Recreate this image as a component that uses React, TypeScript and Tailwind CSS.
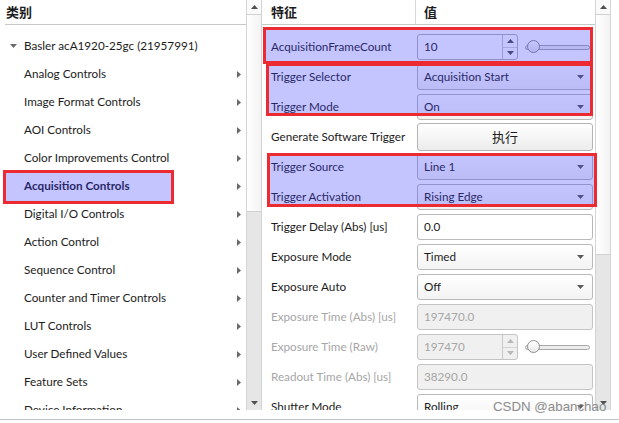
import React from "react";

type Dir = "up" | "down" | "right";

function Tri({ dir, className }: { dir: Dir; className?: string }) {
  const pts =
    dir === "up" ? "0,4 3.5,0 7,4" : dir === "down" ? "0,0 7,0 3.5,4" : "0,0 4,3.5 0,7";
  const w = dir === "right" ? 4 : 7;
  const h = dir === "right" ? 7 : 4;
  return (
    <svg width={w} height={h} viewBox={`0 0 ${w} ${h}`} className={className}>
      <polygon points={pts} fill="currentColor" />
    </svg>
  );
}

function ScrollBar({ thumb }: { thumb: number }) {
  return (
    <div className="flex flex-col w-[16px] h-full border-l border-r border-[#d4d4d4] bg-[#fafafa]">
      <div className="h-[14px] flex items-center justify-center text-[#505050]">
        <Tri dir="up" />
      </div>
      <div
        className="w-full border-y border-[#d0d0d0] bg-gradient-to-r from-white to-[#f3f3f3]"
        style={{ height: thumb }}
      />
      <div className="flex-1 bg-[#e6e6e6]" />
      <div className="h-[14px] flex items-center justify-center text-[#505050] bg-[#e6e6e6]">
        <Tri dir="down" />
      </div>
    </div>
  );
}

const categories = [
  "Analog Controls",
  "Image Format Controls",
  "AOI Controls",
  "Color Improvements Control",
  "Acquisition Controls",
  "Digital I/O Controls",
  "Action Control",
  "Sequence Control",
  "Counter and Timer Controls",
  "LUT Controls",
  "User Defined Values",
  "Feature Sets",
  "Device Information",
];

function Combo({ value }: { value: string }) {
  return (
    <div className="flex items-center justify-between h-[26px] rounded-[3px] border border-[#b9b9b9] bg-gradient-to-b from-white to-[#f3f3f3] pl-[6px] pr-[8px]">
      <span>{value}</span>
      <Tri dir="down" className="text-[#5a5a5a]" />
    </div>
  );
}

function TextBox({ value, disabled }: { value: string; disabled?: boolean }) {
  return (
    <div
      className={`flex items-center h-[26px] rounded-[3px] border pl-[6px] ${
        disabled ? "border-[#c4c4c4] bg-[#f0f0f0] text-[#a6a6a6]" : "border-[#b9b9b9] bg-white"
      }`}
    >
      {value}
    </div>
  );
}

function Spin({ value, disabled }: { value: string; disabled?: boolean }) {
  return (
    <div className="flex items-center h-[26px] gap-[7px]">
      <div
        className={`flex h-full w-[101px] rounded-[3px] border ${
          disabled ? "border-[#c4c4c4] bg-[#f0f0f0] text-[#a6a6a6]" : "border-[#b4b4b4] bg-white"
        }`}
      >
        <div className="flex-1 flex items-center pl-[6px]">{value}</div>
        <div
          className={`w-[15px] flex flex-col border-l border-[#c8c8c8] ${
            disabled ? "text-[#b8b8b8]" : "text-[#505050]"
          }`}
        >
          <div className="flex-1 flex items-center justify-center border-b border-[#d4d4d4]">
            <Tri dir="up" />
          </div>
          <div className="flex-1 flex items-center justify-center">
            <Tri dir="down" />
          </div>
        </div>
      </div>
      <div className="relative flex-1 h-[14px] flex items-center mr-[3px]">
        <div className="w-full h-[5px] rounded-full border border-[#a8a8a8] bg-[#ececec]" />
        <div className="absolute left-[2px] top-[0px] w-[13px] h-[13px] rounded-full border border-[#8f8f8f] bg-gradient-to-b from-white to-[#e8e8e8]" />
      </div>
    </div>
  );
}

type Row = { label: string; disabled?: boolean; widget: React.ReactNode };

const rows: Row[] = [
  { label: "AcquisitionFrameCount", widget: <Spin value="10" /> },
  { label: "Trigger Selector", widget: <Combo value="Acquisition Start" /> },
  { label: "Trigger Mode", widget: <Combo value="On" /> },
  {
    label: "Generate Software Trigger",
    widget: (
      <div className="flex items-center justify-center h-[28px] rounded-[3px] border border-[#b4b4b4] bg-gradient-to-b from-white to-[#ececec] font-['Noto_Sans_CJK_SC',sans-serif] text-[13px]">
        执行
      </div>
    ),
  },
  { label: "Trigger Source", widget: <Combo value="Line 1" /> },
  { label: "Trigger Activation", widget: <Combo value="Rising Edge" /> },
  { label: "Trigger Delay (Abs) [us]", widget: <TextBox value="0.0" /> },
  { label: "Exposure Mode", widget: <Combo value="Timed" /> },
  { label: "Exposure Auto", widget: <Combo value="Off" /> },
  { label: "Exposure Time (Abs) [us]", disabled: true, widget: <TextBox value="197470.0" disabled /> },
  { label: "Exposure Time (Raw)", disabled: true, widget: <Spin value="197470" disabled /> },
  { label: "Readout Time (Abs) [us]", disabled: true, widget: <TextBox value="38290.0" disabled /> },
  { label: "Shutter Mode", widget: <Combo value="Rolling" /> },
];

export default function App() {
  return (
    <div className="relative w-[619px] h-[423px] overflow-hidden bg-white text-[11.7px] text-[#1c1c1c] font-['Lato','Noto_Sans_CJK_SC',sans-serif]">
      <div className="flex h-[410px] overflow-hidden">
        {/* category tree */}
        <div className="w-[246px] flex flex-col overflow-hidden">
          <div className="ml-[5px] h-[25px] shrink-0 flex items-center border-b border-[#c8c8c8] font-bold text-[13px] font-['Noto_Sans_CJK_SC',sans-serif] pl-[1px]">
            类别
          </div>
          <div className="pt-[7px] flex flex-col">
            <div className="h-[28px] shrink-0 flex items-center">
              <Tri dir="down" className="ml-[10px] mr-[7px] text-[#6a6a6a]" />
              <span>Basler acA1920-25gc (21957991)</span>
            </div>
            {categories.map((c) => (
              <div key={c} className="h-[28px] shrink-0 flex items-center justify-between pl-[24px] pr-[5px]">
                <span className={c === "Acquisition Controls" ? "font-bold" : ""}>{c}</span>
                <Tri dir="right" className="text-[#6a6a6a]" />
              </div>
            ))}
          </div>
        </div>

        <ScrollBar thumb={198} />

        {/* feature grid */}
        <div className="w-[333px] flex flex-col overflow-hidden">
          <div className="h-[25px] shrink-0 flex border-b border-[#c8c8c8] font-bold text-[13px] font-['Noto_Sans_CJK_SC',sans-serif]">
            <div className="w-[154px] pl-[9px] flex items-center border-r border-[#d8d8d8]">特征</div>
            <div className="pl-[8px] flex items-center">值</div>
          </div>
          <div className="pt-[7px] flex flex-col">
            {rows.map((r) => (
              <div key={r.label} className="h-[30px] shrink-0 flex items-center">
                <div className={`w-[154px] pl-[9px] ${r.disabled ? "text-[#a6a6a6]" : ""}`}>{r.label}</div>
                <div className="w-[179px] pl-[1px] pr-[2px]">{r.widget}</div>
              </div>
            ))}
          </div>
        </div>

        <ScrollBar thumb={241} />
        <div className="flex-1" />
      </div>
      <div className="mt-[9px] h-px bg-[#c4c4c4]" />

      {/* annotation boxes */}
      <div className="absolute left-[3px] top-[170px] w-[171px] h-[34px] border-[3px] border-[#ec2a32] bg-[#3a3aff]/30" />
      <div className="absolute left-[263px] top-[27px] w-[330px] h-[37px] border-[3px] border-[#ec2a32] bg-[#3a3aff]/30" />
      <div className="absolute left-[266px] top-[63px] w-[327px] h-[53px] border-[3px] border-[#ec2a32] bg-[#3a3aff]/30" />
      <div className="absolute left-[267px] top-[153px] w-[330px] h-[54px] border-[3px] border-[#ec2a32] bg-[#3a3aff]/30" />

      <div className="absolute left-[493px] top-[399px] whitespace-nowrap text-[13.3px] leading-[16px] text-[#8c8c8c] font-['Liberation_Sans',sans-serif]">
        CSDN @abanchao
      </div>
    </div>
  );
}
